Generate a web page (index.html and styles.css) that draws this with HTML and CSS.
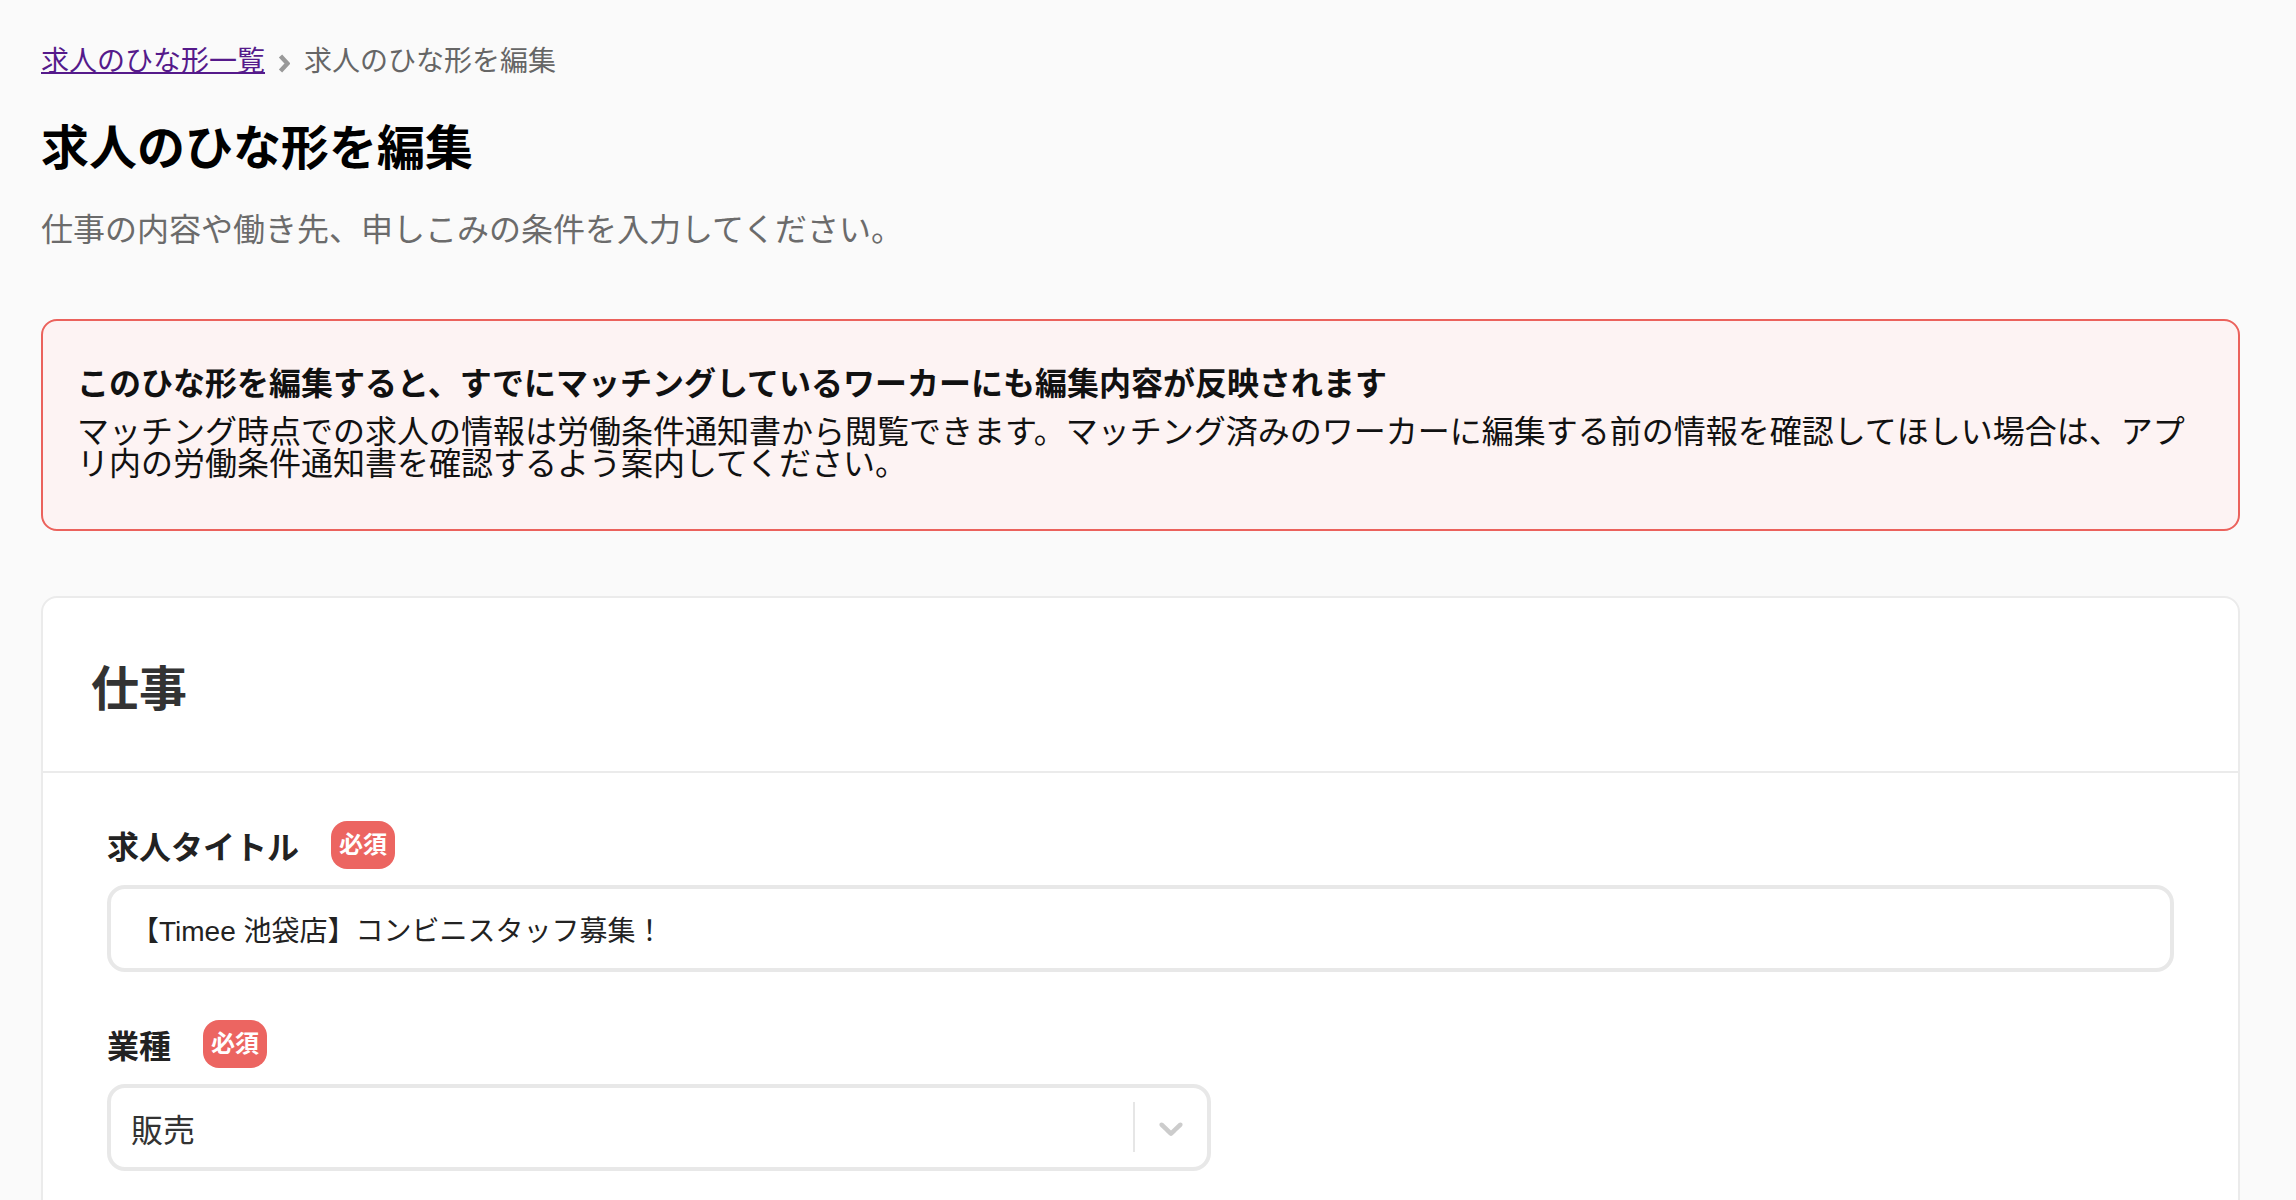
FILE: index.html
```html
<!DOCTYPE html>
<html lang="ja">
<head>
    <meta charset="UTF-8">
    <meta name="viewport" content="width=device-width, initial-scale=1.0">
    <title>求人のひな形を編集</title>
    <link rel="stylesheet" href="styles.css">
</head>
<body>
    <div class="page">
        <nav class="breadcrumb">
            <a href="#" class="crumb-link">求人のひな形一覧</a>
            <svg class="crumb-sep" viewBox="0 0 12 20"><polyline points="2.5,2.5 9.5,10 2.5,17.5"/></svg>
            <span class="crumb-current">求人のひな形を編集</span>
        </nav>
        <h1 class="page-title">求人のひな形を編集</h1>
        <p class="page-lead">仕事の内容や働き先、申しこみの条件を入力してください。</p>

        <!-- 編集時の注意 -->
        <div class="alert">
            <p class="alert-title">このひな形を編集すると、すでにマッチングしているワーカーにも編集内容が反映されます</p>
            <p class="alert-body">マッチング時点での求人の情報は労働条件通知書から閲覧できます。マッチング済みのワーカーに編集する前の情報を確認してほしい場合は、アプリ内の労働条件通知書を確認するよう案内してください。</p>
        </div>

        <section class="card">
            <div class="card-header">
                <h2 class="card-title">仕事</h2>
            </div>
            <div class="card-body">
                <div class="field">
                    <div class="field-label">
                        <label for="title">求人タイトル</label>
                        <span class="badge">必須</span>
                    </div>
                    <input type="text" id="title" class="text-input" value="【Timee 池袋店】コンビニスタッフ募集！">
                </div>
                <div class="field">
                    <div class="field-label">
                        <label>業種</label>
                        <span class="badge">必須</span>
                    </div>
                    <div class="select">
                        <div class="select-value">販売</div>
                        <span class="select-sep"></span>
                        <div class="select-arrow">
                            <svg viewBox="0 0 20 20"><path d="M4.516 7.548c0.436-0.446 1.043-0.481 1.576 0l3.908 3.747 3.908-3.747c0.533-0.481 1.141-0.446 1.574 0 0.436 0.445 0.408 1.197 0 1.615-0.406 0.418-4.695 4.502-4.695 4.502-0.217 0.223-0.502 0.335-0.787 0.335s-0.57-0.112-0.789-0.335c0 0-4.287-4.084-4.695-4.502s-0.436-1.17 0-1.615z"/></svg>
                        </div>
                    </div>
                </div>
            </div>
        </section>
    </div>
</body>
</html>
```

FILE: styles.css
```css
body {
    margin: 0;
    background: #fafafa;
    font-family: "Liberation Sans", "Noto Sans CJK JP", sans-serif;
    color: #222;
}
.page {
    padding: 42px 56px 80px 41px;
}
.breadcrumb {
    display: flex;
    align-items: center;
    height: 40px;
    font-size: 28px;
    line-height: 40px;
}
.crumb-link {
    color: #551a8b;
    text-decoration: underline;
    text-decoration-thickness: 2px;
}
.crumb-sep {
    width: 12px;
    height: 21px;
    margin: 2px 14px 0 13px;
    fill: none;
    stroke: #999;
    stroke-width: 4.5;
}
.crumb-current {
    color: #666;
}
.page-title {
    margin: 31px 0 0;
    font-size: 48px;
    line-height: 72px;
    font-weight: 700;
    color: #000;
}
.page-lead {
    margin: 21px 0 0;
    font-size: 32px;
    line-height: 48px;
    color: #6b6b6b;
}
.alert {
    margin-top: 65px;
    padding: 47px 34px 49px;
    background: #fdf3f3;
    border: 2px solid #eb625c;
    border-radius: 16px;
}
.alert-title {
    margin: 0 0 16px;
    font-size: 32px;
    line-height: 32px;
    font-weight: 700;
    color: #111;
}
.alert-body {
    margin: 0;
    font-size: 32px;
    line-height: 32px;
    color: #111;
}
.card {
    margin-top: 65px;
    background: #fff;
    border: 2px solid #ebebeb;
    border-radius: 16px;
}
.card-header {
    display: flex;
    align-items: center;
    height: 173px;
    padding: 0 48px;
    border-bottom: 2px solid #ebebeb;
}
.card-title {
    margin: 0;
    font-size: 48px;
    font-weight: 700;
    color: #333;
}
.card-body {
    padding: 48px 64px 120px;
}
.field + .field {
    margin-top: 48px;
}
.field-label {
    display: flex;
    align-items: center;
    gap: 32px;
    height: 48px;
    margin-bottom: 16px;
}
.field-label label {
    font-size: 32px;
    font-weight: 700;
    color: #222;
}
.badge {
    height: 48px;
    padding: 0 8px;
    line-height: 48px;
    font-size: 24px;
    font-weight: 700;
    color: #fff;
    background: #ec6561;
    border-radius: 16px;
}
.text-input {
    display: block;
    box-sizing: border-box;
    width: 100%;
    height: 87px;
    padding: 0 20px;
    border: 4px solid #e8e8e8;
    border-radius: 18px;
    background: #fff;
    font-family: inherit;
    font-size: 28px;
    color: #222;
    outline: none;
}
.select {
    display: flex;
    align-items: center;
    box-sizing: border-box;
    width: 1104px;
    height: 87px;
    border: 4px solid #e8e8e8;
    border-radius: 18px;
    background: #fff;
}
.select-value {
    flex: 1;
    padding: 0 20px;
    font-size: 32px;
    color: #333;
}
.select-sep {
    align-self: stretch;
    width: 2px;
    margin: 14px 0 15px;
    background: #e6e6e6;
}
.select-arrow {
    display: flex;
    padding: 0 16px;
}
.select-arrow svg {
    width: 40px;
    height: 40px;
    fill: #ccc;
}
```
